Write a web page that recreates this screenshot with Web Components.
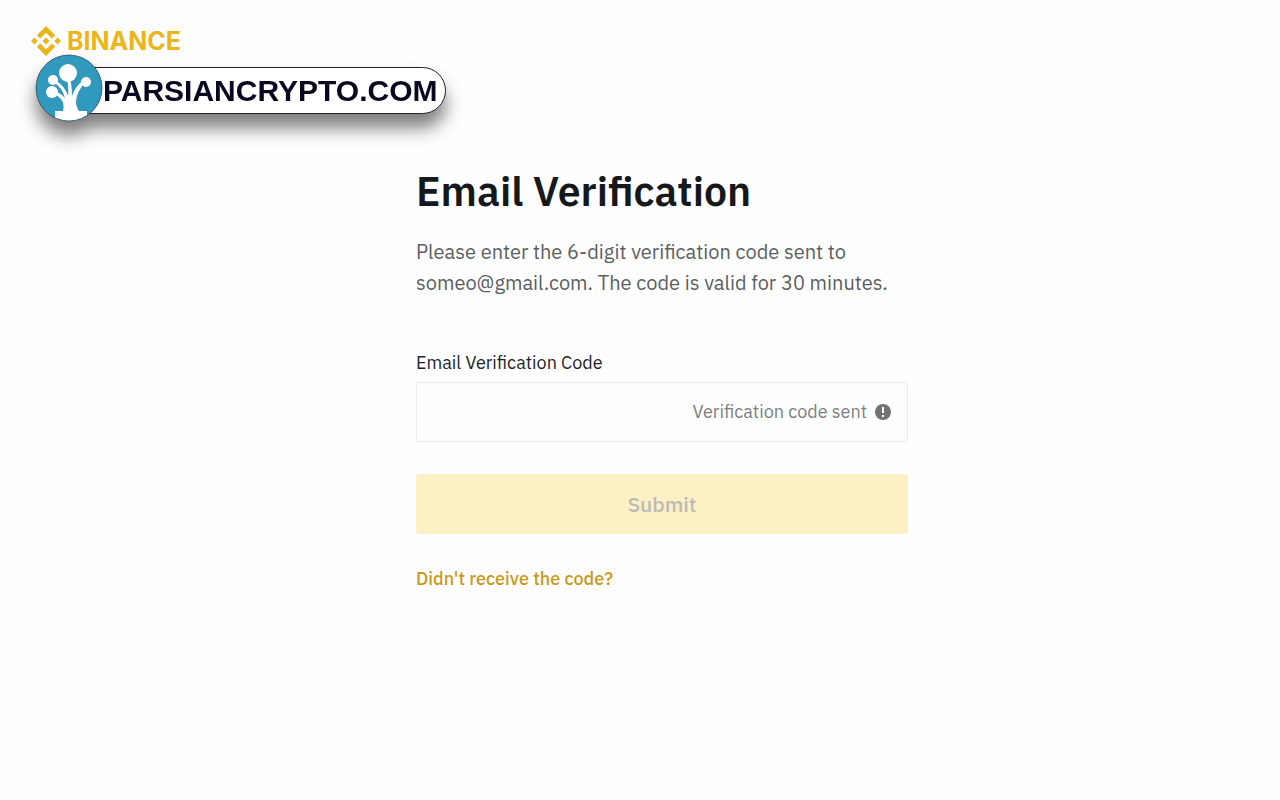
<!DOCTYPE html>
<html lang="en">
<head>
<meta charset="utf-8">
<meta name="viewport" content="width=device-width, initial-scale=1">
<title>Email Verification</title>
<style>
  body { margin: 0; background: #fefefe; color: #1e2329; font-family: "IBM Plex Sans", Roboto, "Noto Sans", sans-serif; }
</style>
</head>
<body>
<verification-page></verification-page>
<script>
  const define = (name, html) => {
    const template = document.createElement('template');
    template.innerHTML = html;
    customElements.define(name, class extends HTMLElement {
      constructor() {
        super();
        this.attachShadow({ mode: 'open' }).append(template.content.cloneNode(true));
      }
    });
  };

  define('brand-logo', `
    <style>
      :host { display: flex; align-items: center; height: 30px; gap: 6px; color: #ecb51b; }
      svg { width: 30px; height: 30px; flex: none; }
      span { font: 700 25px/30px Inter, sans-serif; }
    </style>
    <svg viewBox="0 0 126.61 126.61" fill="currentColor" aria-hidden="true">
      <path d="M38.73 53.2l24.59-24.58 24.6 24.6 14.3-14.31L63.32 0l-38.9 38.9zM0 63.31l14.3-14.31 14.31 14.31-14.31 14.3zM38.73 73.41l24.59 24.59 24.6-24.6 14.31 14.29-38.9 38.91-38.91-38.88zM98 63.31l14.3-14.31 14.31 14.3-14.31 14.32zM77.83 63.3L63.32 48.78 48.81 63.27l14.51 14.55z"/>
    </svg>
    <span><slot></slot></span>`);

  define('site-badge', `
    <style>
      :host { display: flex; align-items: center; width: max-content; filter: drop-shadow(0 14px 9px rgba(0,0,0,.5)); }
      svg { width: 68px; height: 68px; flex: none; z-index: 1; }
      span { box-sizing: border-box; height: 47px; margin: 4px 0 0 -20px; padding: 0 8px 0 19px; border: 1px solid #222; border-radius: 0 24px 24px 0; background: #fff; color: #080820; font: 700 30px/46px "Liberation Sans", sans-serif; }
    </style>
    <svg viewBox="0 0 68 68" aria-hidden="true">
      <clipPath id="disc"><circle cx="34" cy="34" r="33"/></clipPath>
      <circle cx="34" cy="34" r="33" fill="#3199be"/>
      <g clip-path="url(#disc)" fill="#fff">
        <path d="M20 68V57h8q2-8-3-13-3-3-8-5l1-2q7 1 12 7-3-11-12-16l2-2q10 6 13 16 1-9-1-17h3q2 7 2 17 3-10 13-17l2 2q-10 9-11 20 0 6 3 10h8v11z"/>
      </g>
      <g fill="#fff"><circle cx="33" cy="19" r="9"/><circle cx="18" cy="26" r="5"/><circle cx="17" cy="38" r="6"/><circle cx="51" cy="28" r="5"/></g>
      <circle cx="34" cy="34" r="33" fill="none" stroke="#173f50" stroke-opacity=".7"/>
    </svg>
    <span><slot></slot></span>`);

  define('code-field', `
    <style>
      :host { display: block; }
      label { display: block; margin-bottom: 7px; font-size: 18px; line-height: 24px; }
      .box { display: flex; align-items: center; height: 60px; box-sizing: border-box; padding: 0 16px; border: 1px solid #ebebec; border-radius: 4px; background: #fefefe; color: #7d7f82; }
      input { flex: 1; min-width: 0; height: 40px; border: 0; padding: 0; outline: 0; background: none; font: inherit; font-size: 18px; color: #1e2329; }
      span { font-size: 18px; line-height: 24px; margin-right: 8px; }
      svg { width: 16px; height: 16px; flex: none; }
    </style>
    <label for="code"><slot></slot></label>
    <div class="box">
      <input id="code" type="text" inputmode="numeric" autocomplete="off">
      <span><slot name="status"></slot></span>
      <svg viewBox="0 0 16 16" aria-hidden="true"><circle cx="8" cy="8" r="8" fill="#717275"/><path d="M7 3h2v6H7zM7 11h2v2H7z" fill="#fff"/></svg>
    </div>`);

  define('submit-button', `
    <style>
      :host { display: block; }
      button { display: block; width: 100%; height: 60px; border: 0; border-radius: 4px; background: #fdf0c4; color: #bcbab7; font: inherit; font-size: 21px; font-weight: 500; }
    </style>
    <button type="button" disabled><slot></slot></button>`);

  define('verification-page', `
    <style>
      :host { display: block; }
      header { padding: 26px 31px 0; }
      brand-logo { margin-bottom: -2px; }
      site-badge { margin-left: 4px; }
      main { box-sizing: border-box; max-width: 492px; margin: 0 auto; padding: 45px 0; }
      .shift { padding-left: 44px; }
      h1 { margin: 0 0 21px; font-size: 41px; line-height: 48px; font-weight: 600; color: #15191d; }
      p { margin: 0 0 53px; font-size: 20px; line-height: 31px; color: #5b5e62; }
      code-field { margin-bottom: 32px; }
      submit-button { margin-bottom: 33px; }
      a { display: inline-block; font-size: 18px; line-height: 24px; font-weight: 500; color: #c99a1b; text-decoration: none; }
    </style>
    <header>
      <brand-logo>BINANCE</brand-logo>
      <site-badge>PARSIANCRYPTO.COM</site-badge>
    </header>
    <div class="shift">
      <main>
        <h1>Email Verification</h1>
        <p>Please enter the 6-digit verification code sent to someo@gmail.com. The code is valid for 30 minutes.</p>
        <code-field>Email Verification Code<span slot="status">Verification code sent</span></code-field>
        <submit-button>Submit</submit-button>
        <a href="#">Didn't receive the code?</a>
      </main>
    </div>`);
</script>
</body>
</html>
